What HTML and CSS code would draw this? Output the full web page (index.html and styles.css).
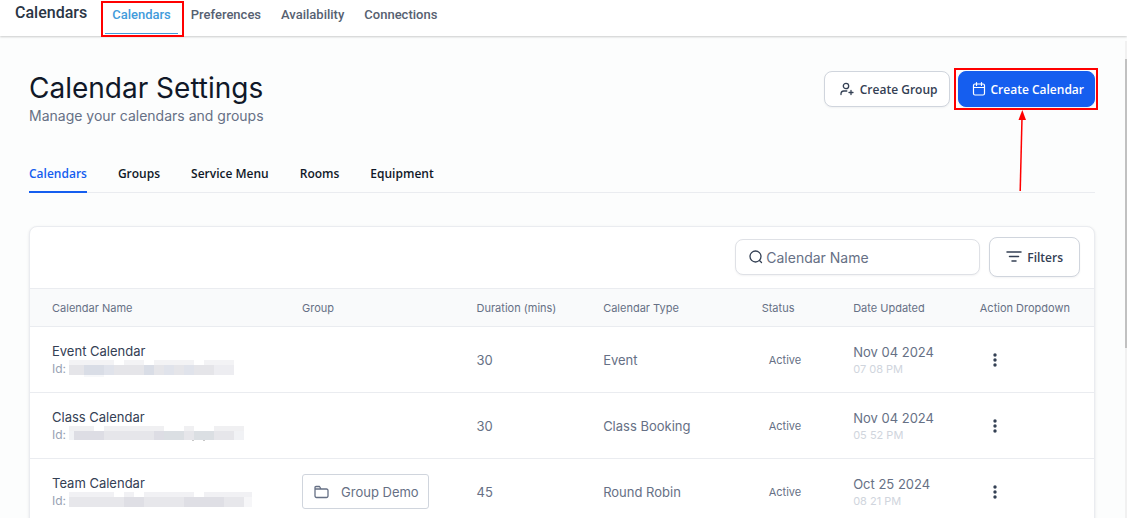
FILE: index.html
```html
<!DOCTYPE html>
<html lang="en">
<head>
    <meta charset="utf-8">
    <title>Calendar Settings</title>
    <link rel="stylesheet" href="styles.css">
</head>

<body>
    <header class="topbar">
        <div class="topbar-title">Calendars</div>
        <nav class="topnav">
            <a href="#" class="active">Calendars<span class="mark mark-tab"></span></a>
            <a href="#">Preferences</a>
            <a href="#">Availability</a>
            <a href="#">Connections</a>
        </nav>
    </header>

    <div class="page">
        <main class="content">
            <div class="heading">
                <div>
                    <h1>Calendar Settings</h1>
                    <p>Manage your calendars and groups</p>
                </div>
                <div class="actions">
                    <button type="button" class="btn">
                        <svg width="16" height="16" viewBox="0 0 16 16" fill="none" stroke="currentColor" stroke-width="1.3" stroke-linecap="round">
                            <circle cx="7" cy="5" r="2.7"/>
                            <path d="M2 13.5v-1a2.800 2.800 0 0 1 2.800-2.500h3M12 9.500v4M10 11.500h4"/>
                        </svg>
                        Create Group
                    </button>
                    <div class="create">
                        <button type="button" class="btn btn-primary">
                            <svg width="14" height="16" viewBox="0 0 14 16" fill="none" stroke="currentColor" stroke-width="1.2" stroke-linecap="round">
                                <rect x="1.5" y="3" width="11" height="11" rx="1.5"/>
                                <path d="M1.5 6.5h11M4.5 1.5v3M9.5 1.5v3"/>
                            </svg>
                            Create Calendar
                        </button>
                        <span class="mark mark-create"></span>
                        <svg class="arrow" width="12" height="82" viewBox="0 0 12 82">
                            <path d="M5.2 81L7 8" stroke="#f00" stroke-width="1.5" fill="none"/>
                            <path d="M7.3 0L11 10H3.5z" fill="#f00"/>
                        </svg>
                    </div>
                </div>
            </div>

            <nav class="tabs">
                <a href="#" class="active">Calendars</a>
                <a href="#">Groups</a>
                <a href="#">Service Menu</a>
                <a href="#">Rooms</a>
                <a href="#">Equipment</a>
            </nav>

            <section class="card">
                <div class="toolbar">
                    <label class="search">
                        <svg width="14" height="14" viewBox="0 0 14 14" fill="none" stroke="currentColor" stroke-width="1.3" stroke-linecap="round">
                            <circle cx="6.5" cy="6.5" r="5.5"/>
                            <path d="M10.5 10.5l2 2"/>
                        </svg>
                        <input type="text" placeholder="Calendar Name" aria-label="Calendar Name">
                    </label>
                    <button type="button" class="btn btn-filter">
                        <svg width="16" height="14" viewBox="0 0 16 14" fill="none" stroke="currentColor" stroke-width="1.5" stroke-linecap="round">
                            <path d="M1 2h14M3.5 6.5h9M6 11h4"/>
                        </svg>
                        Filters
                    </button>
                </div>

                <table>
                    <thead>
                        <tr>
                            <th class="c-name">Calendar Name</th>
                            <th class="c-group">Group</th>
                            <th class="c-duration">Duration (mins)</th>
                            <th class="c-type">Calendar Type</th>
                            <th class="c-status">Status</th>
                            <th class="c-date">Date Updated</th>
                            <th class="c-action">Action Dropdown</th>
                        </tr>
                    </thead>
                    <tbody>
                        <tr>
                            <td>
                                <div class="name">Event Calendar</div>
                                <div class="id">Id:
                                    <svg width="166" height="17" viewBox="0 0 166 17" shape-rendering="crispEdges">
                                        <path fill="#f3f3f5" d="M0 0h45v5H0zM55 0h20v5H55zM85 0h40v5H85zM135 0h30v5h-30z"/>
                                        <path fill="#e5e5e9" d="M0 5h165v10H0z"/>
                                        <path fill="#d9dde6" d="M15 5h20v10H15zM75 5h10v10H75z"/>
                                        <path fill="#e0e3eb" d="M35 5h10v10H35zM95 5h10v10H95zM115 5h10v10h-10z"/>
                                        <path fill="#ededf1" d="M145 5h20v10h-20z"/>
                                        <path fill="#f7f8fa" d="M15 15h20v2H15z"/>
                                    </svg>
                                </div>
                            </td>
                            <td></td>
                            <td>30</td>
                            <td>Event</td>
                            <td class="status">Active</td>
                            <td>Nov 04 2024<div class="time">07 08 PM</div></td>
                            <td><button type="button" class="more" aria-label="Actions"><svg width="4" height="14" viewBox="0 0 4 14" fill="currentColor"><circle cx="2" cy="2" r="1.7"/><circle cx="2" cy="7" r="1.7"/><circle cx="2" cy="12" r="1.7"/></svg></button></td>
                        </tr>
                        <tr>
                            <td>
                                <div class="name">Class Calendar</div>
                                <div class="id">Id:
                                    <svg width="175" height="17" viewBox="0 0 175 17" shape-rendering="crispEdges">
                                        <path fill="#f0f0f2" d="M0 0h25v5H0zM35 0h60v5H35zM115 0h10v5h-10zM145 0h30v5h-30z"/>
                                        <path fill="#e6e6ea" d="M0 5h175v9H0z"/>
                                        <path fill="#dddde4" d="M5 5h30v9H5zM85 5h10v9H85z"/>
                                        <path fill="#dbdfe3" d="M95 5h20v9H95zM125 5h20v9h-20z"/>
                                        <path fill="#f1f2f5" d="M0 5h5v9H0zM165 5h10v9h-10z"/>
                                        <path fill="#c8c8c8" d="M123 14h2v1h-2zM134 14h2v1h-2z"/>
                                    </svg>
                                </div>
                            </td>
                            <td></td>
                            <td>30</td>
                            <td>Class Booking</td>
                            <td class="status">Active</td>
                            <td>Nov 04 2024<div class="time">05 52 PM</div></td>
                            <td><button type="button" class="more" aria-label="Actions"><svg width="4" height="14" viewBox="0 0 4 14" fill="currentColor"><circle cx="2" cy="2" r="1.7"/><circle cx="2" cy="7" r="1.7"/><circle cx="2" cy="12" r="1.7"/></svg></button></td>
                        </tr>
                        <tr>
                            <td>
                                <div class="name">Team Calendar</div>
                                <div class="id">Id:
                                    <svg width="183" height="17" viewBox="0 0 183 17" shape-rendering="crispEdges">
                                        <path fill="#f1f1f4" d="M0 0h45v5H0zM55 0h10v5H55zM75 0h50v5H75zM135 0h48v5h-48z"/>
                                        <path fill="#e7e7eb" d="M0 5h175v10H0z"/>
                                        <path fill="#dfdfe5" d="M55 5h20v10H55zM115 5h40v10h-40z"/>
                                        <path fill="#f6f6f8" d="M175 5h8v10h-8z"/>
                                    </svg>
                                </div>
                            </td>
                            <td>
                                <button type="button" class="group">
                                    <svg width="15" height="14" viewBox="0 0 15 14" fill="none" stroke="currentColor" stroke-width="1.3" stroke-linejoin="round">
                                        <path d="M1 11V2.500a1 1 0 0 1 1-1h3.500l1.500 2.500h5.500a1.500 1.500 0 0 1 1.500 1.500V11a1.500 1.500 0 0 1-1.500 1.500h-10A1.500 1.500 0 0 1 1 11zM1 4h6"/>
                                    </svg>
                                    Group Demo
                                </button>
                            </td>
                            <td>45</td>
                            <td>Round Robin</td>
                            <td class="status">Active</td>
                            <td>Oct 25 2024<div class="time">08 21 PM</div></td>
                            <td><button type="button" class="more" aria-label="Actions"><svg width="4" height="14" viewBox="0 0 4 14" fill="currentColor"><circle cx="2" cy="2" r="1.7"/><circle cx="2" cy="7" r="1.7"/><circle cx="2" cy="12" r="1.7"/></svg></button></td>
                        </tr>
                    </tbody>
                </table>
            </section>
        </main>
        <div class="scrollbar"><div class="thumb"></div></div>
    </div>
</body>

</html>
```

FILE: styles.css
```css
* {
    box-sizing: border-box;
}

body {
    margin: 0;
    height: 100vh;
    display: flex;
    flex-direction: column;
    overflow: hidden;
    font-family: Inter, sans-serif;
    font-size: 13px;
    color: #667085;
    background-color: #fcfdfd;
}

a {
    text-decoration: none;
}

button, input {
    font: inherit;
    color: inherit;
}

button {
    cursor: pointer;
}

.topbar {
    display: flex;
    align-items: flex-start;
    gap: 18px;
    flex: none;
    height: 36px;
    padding-left: 15px;
    font-family: Roboto, sans-serif;
    font-weight: 500;
    background-color: #fff;
    box-shadow: 0 1px 2px rgba(0, 0, 0, 0.2);
}

.topbar-title {
    font-size: 16px;
    line-height: 26px;
    color: #2a3545;
}

.topnav {
    display: flex;
    gap: 6px;
}

.topnav a {
    position: relative;
    height: 34px;
    padding: 0 7px;
    font-size: 13px;
    line-height: 30px;
    color: #566171;
}

.topnav a.active {
    color: #429bdb;
    border-bottom: 1px solid #429bdb;
}

/* red highlight frames */
.mark {
    position: absolute;
    border: 2px solid #f00;
    pointer-events: none;
}

.mark-tab {
    inset: 1px -6px -4px -4px;
}

.mark-create {
    inset: -3px -3px -3px -4px;
}

.arrow {
    position: absolute;
    top: 39px;
    right: 68px;
}

.page {
    flex: 1;
    display: flex;
    min-height: 0;
}

.content {
    flex: 1;
    min-width: 0;
    padding: 35px 30px 0 29px;
}

.scrollbar {
    width: 2px;
    margin-top: 5px;
    padding-top: 18px;
    background-color: #f1f1f1;
}

.thumb {
    height: 63%;
    background-color: #c1c1c1;
}

.heading {
    display: flex;
    justify-content: space-between;
    align-items: flex-start;
}

h1 {
    margin: 0;
    font-size: 28px;
    font-weight: 400;
    line-height: 34px;
    color: #101828;
}

.heading p {
    margin: 0;
    font-size: 14px;
    line-height: 22px;
}

.actions {
    display: flex;
    gap: 8px;
}

.create {
    position: relative;
}

.btn {
    display: flex;
    align-items: center;
    gap: 5px;
    height: 36px;
    padding: 0 11px 0 14px;
    font-family: "Open Sans", sans-serif;
    font-size: 12px;
    font-weight: 600;
    color: #344054;
    background-color: #fff;
    border: 1px solid #d0d5dd;
    border-radius: 8px;
    box-shadow: 0 1px 2px rgba(16, 24, 40, 0.05);
    white-space: nowrap;
}

.btn-primary {
    padding: 0 10px 0 13px;
    color: #fff;
    background-color: #155eef;
    border-color: #155eef;
}

.tabs {
    display: flex;
    gap: 31px;
    margin-top: 35px;
    border-bottom: 1px solid #eaecf0;
    font-family: "Open Sans", sans-serif;
    font-size: 12px;
    font-weight: 600;
}

.tabs a {
    height: 31px;
    margin-bottom: -1px;
    line-height: 24px;
    color: #101828;
}

.tabs a.active {
    color: #155eef;
    border-bottom: 2px solid #155eef;
}

.card {
    margin-top: 33px;
    background-color: #fff;
    border: 1px solid #eaecf0;
    border-radius: 8px;
    box-shadow: 0 1px 3px rgba(16, 24, 40, 0.1);
}

.toolbar {
    display: flex;
    justify-content: flex-end;
    align-items: center;
    gap: 9px;
    padding: 10px 14px 11px;
}

.search {
    display: flex;
    align-items: center;
    gap: 3px;
    width: 245px;
    height: 36px;
    padding: 0 13px;
    color: #344054;
    background-color: #fff;
    border: 1px solid #dfe1e6;
    border-radius: 8px;
    box-shadow: 0 1px 2px rgba(16, 24, 40, 0.05);
}

.search svg {
    flex: none;
}

.search input {
    flex: 1;
    min-width: 0;
    padding: 0;
    font-size: 14px;
    border: none;
    outline: none;
    background: none;
}

.search input::placeholder {
    color: #667085;
}

.btn-filter {
    height: 40px;
    padding: 0 16px;
}

table {
    width: 100%;
    table-layout: fixed;
    border-collapse: collapse;
}

th {
    height: 38px;
    padding: 0 0 0 22px;
    font-size: 11px;
    font-weight: 400;
    text-align: left;
    background-color: #f9fafb;
    border-top: 1px solid #eaecf0;
    border-bottom: 1px solid #eaecf0;
}

td {
    height: 66px;
    padding: 0 0 0 22px;
    line-height: 18px;
    border-bottom: 1px solid #eaecf0;
}

.c-name { width: 23.5%; }
.c-group { width: 16.4%; }
.c-duration { width: 11.9%; }
.c-type { width: 14.9%; }
.c-status { width: 8.6%; }
.c-date { width: 11.9%; }
.c-action { width: 12.8%; }

.name {
    font-size: 13px;
    color: #344054;
}

.id {
    display: flex;
    align-items: center;
    gap: 3px;
    font-size: 12px;
    color: #98a2b3;
}

td.status {
    padding-left: 29px;
    font-size: 11px;
}

.time {
    font-size: 11px;
    line-height: 16px;
    color: #d0d5dd;
}

.group {
    display: flex;
    align-items: center;
    gap: 12px;
    height: 35px;
    padding: 0 9px 0 11px;
    background-color: #fff;
    border: 1px solid #d0d5dd;
    border-radius: 3px;
    white-space: nowrap;
}

.more {
    display: block;
    margin-left: 13px;
    padding: 0;
    color: #344054;
    background: none;
    border: none;
}

.more svg {
    display: block;
}
```
